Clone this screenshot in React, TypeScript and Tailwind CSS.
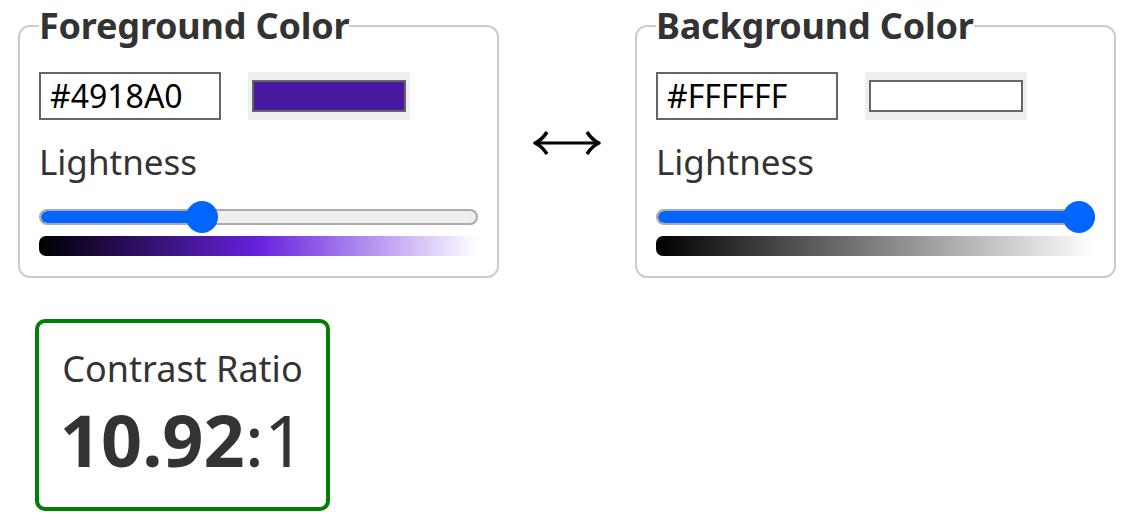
import React from "react";

const font = { fontFamily: '"Noto Sans", "Open Sans", sans-serif' };

interface ColorPanelProps {
  title: string;
  hex: string;
  lightness: number;
  gradient: string;
}

const ColorPanel: React.FC<ColorPanelProps> = ({ title, hex, lightness, gradient }) => {
  return (
    <fieldset className="w-[481px] border-2 border-[#cccccc] rounded-[12px] px-[19px] pt-[24px] pb-[20px]">
      <legend className="text-[36px] leading-[44px] font-bold text-[#333333] tracking-[-0.2px]">
        {title}
      </legend>

      <div className="flex items-center gap-[27px]">
        <input
          type="text"
          readOnly
          value={hex}
          className="w-[182px] h-[48px] border-2 border-[#666666] px-[9px] text-[32px] text-black outline-none"
          style={font}
        />
        <div className="w-[162px] h-[48px] bg-[#eeeeee] px-[4px] py-[8px]">
          <div
            className="w-full h-full border-2 border-[#666666]"
            style={{ backgroundColor: hex }}
          />
        </div>
      </div>

      <div className="mt-[19px] text-[35px] leading-[46px] text-[#333333]">Lightness</div>

      {/* slider */}
      <div className="relative mt-[16px] h-[32px] flex items-center">
        <div className="relative w-full h-[16px] rounded-full bg-[#eeeeee] border-2 border-[#aaaaaa] overflow-hidden">
          <div
            className="absolute left-0 top-0 bottom-0 bg-[#0066ff] rounded-full"
            style={{ width: `${lightness}%` }}
          />
        </div>
        <div
          className="absolute top-0 w-[32px] h-[32px] rounded-full bg-[#0066ff]"
          style={{ left: `calc(${lightness / 100} * (100% - 32px))` }}
        />
      </div>

      <div
        className="mt-[3px] h-[20px] rounded-l-[7px]"
        style={{ backgroundImage: gradient }}
      />
    </fieldset>
  );
};

export default function App() {
  return (
    <div className="bg-white w-[1138px] h-[530px] pl-[18px] pt-[4px] text-[#333333]" style={font}>
      <div className="flex items-start">
        <ColorPanel
          title="Foreground Color"
          hex="#4918A0"
          lightness={36}
          gradient="linear-gradient(to right, #000000, hsl(262 74% 50%) 50%, #ffffff)"
        />
        <div className="w-[136px] h-[254px] flex items-center justify-center pt-[24px]">
          <svg width="70" height="28" viewBox="0 0 70 28" fill="none">
            <path d="M3 14 H67" stroke="black" strokeWidth="3" />
            <path d="M15 3 Q10 11 3 14 Q10 17 15 25" stroke="black" strokeWidth="3.5" strokeLinejoin="round" />
            <path d="M55 3 Q60 11 67 14 Q60 17 55 25" stroke="black" strokeWidth="3.5" strokeLinejoin="round" />
          </svg>
        </div>
        <ColorPanel
          title="Background Color"
          hex="#FFFFFF"
          lightness={100}
          gradient="linear-gradient(to right, #000000, #ffffff)"
        />
      </div>

      <div className="mt-[41px] ml-[17px] w-[295px] h-[192px] border-4 border-[#008000] rounded-[10px] flex flex-col items-center pt-[22px]">
        <div className="text-[36px] leading-[48px] text-[#333333]">Contrast Ratio</div>
        <div className="text-[72px] leading-[84px] text-[#333333] mt-[4px]">
          <span className="font-bold">10.92</span>:1
        </div>
      </div>
    </div>
  );
}
